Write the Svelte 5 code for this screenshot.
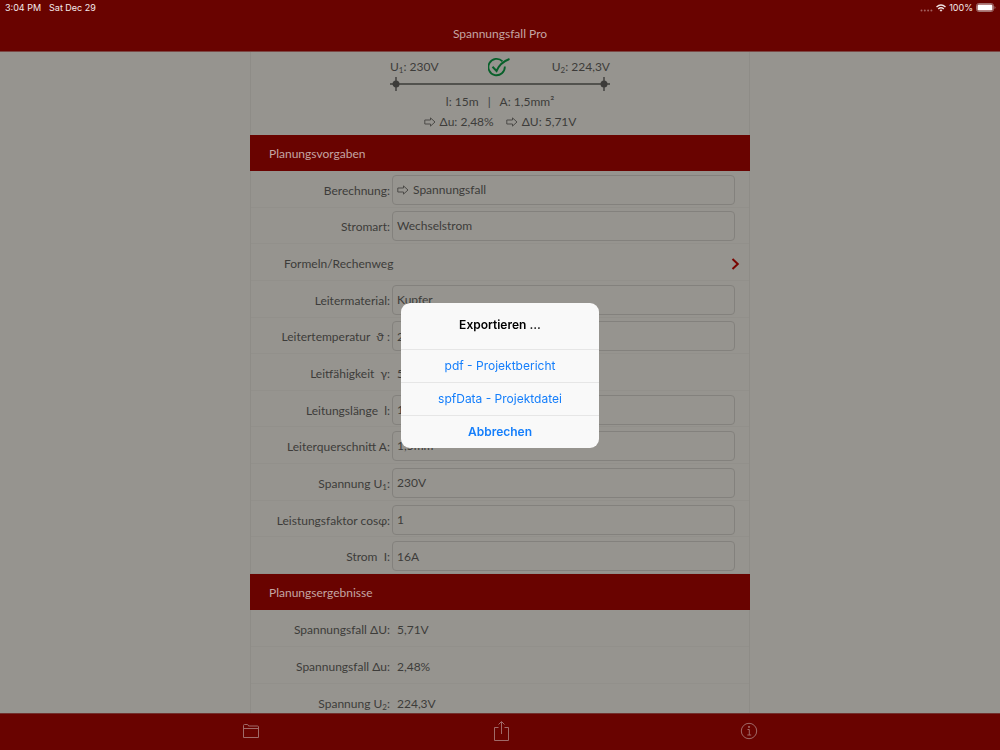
<script>
  const inputs = [
    { id: 'berechnung', label: 'Berechnung:', value: 'Spannungsfall', kind: 'select', arrow: true },
    { id: 'stromart', label: 'Stromart:', value: 'Wechselstrom', kind: 'select' },
    { id: 'formeln', label: 'Formeln/Rechenweg', kind: 'link' },
    { id: 'material', label: 'Leitermaterial:', value: 'Kupfer', kind: 'select' },
    { id: 'temperatur', label: 'Leitertemperatur \u00a0ϑ\u00a0:', value: '20°C', kind: 'input' },
    { id: 'leitfaehigkeit', label: 'Leitfähigkeit \u00a0γ:', value: '56', kind: 'text' },
    { id: 'laenge', label: 'Leitungslänge \u00a0l:', value: '15m', kind: 'input' },
    { id: 'querschnitt', label: 'Leiterquerschnitt A:', value: '1,5mm²', kind: 'select' },
    { id: 'spannung', label: 'Spannung U', sub: '1', value: '230V', kind: 'input' },
    { id: 'faktor', label: 'Leistungsfaktor cosφ:', value: '1', kind: 'input' },
    { id: 'strom', label: 'Strom \u00a0I:', value: '16A', kind: 'input' }
  ];
  const results = [
    { label: 'Spannungsfall ΔU:', value: '5,71V' },
    { label: 'Spannungsfall Δu:', value: '2,48%' },
    { label: 'Spannung U', sub: '2', value: '224,3V' }
  ];
  let open = $state(true);
  const close = () => (open = false);
</script>

{#snippet arrow()}
  <svg class="arrow" width="12" height="10" viewBox="0 0 12 10" fill="none" stroke="#4c4b48" aria-hidden="true">
    <path d="M.8 3H6.500V.9L11 5L6.500 9.100V7H.8Z" />
  </svg>
{/snippet}

<div class="app">
  <header>
    <div class="status">
      <span>3:04 PM</span>
      <span>Sat Dec 29</span>
      <span class="right">
        <svg width="13" height="8" viewBox="0 0 13 8" aria-hidden="true">
          <g fill="#a2605e"><circle cx="1.5" cy="6.5" r="1" /><circle cx="4.8" cy="6.5" r="1" /><circle cx="8.1" cy="6.5" r="1" /><circle cx="11.4" cy="6.5" r="1" /></g>
        </svg>
        <svg width="10" height="8" viewBox="0 0 10 8" fill="none" stroke="#f0e4e4" stroke-width="1.4" aria-hidden="true">
          <path d="M.5 3Q5-1 9.500 3M2.200 4.900Q5 2.400 7.800 4.900" />
          <path d="M3.500 6Q5 4.800 6.500 6L5 7.700Z" fill="#f0e4e4" stroke="none" />
        </svg>
        <span>100%</span>
        <svg width="20" height="9" viewBox="0 0 20 9" aria-hidden="true">
          <rect x=".5" y=".5" width="17" height="8" rx="2.300" fill="none" stroke="#a2706e" />
          <rect x="1.500" y="1.500" width="15" height="6" rx="1.300" fill="#fff" />
          <path d="M18.500 3v3q1-.5 1-1.500t-1-1.500" fill="#a2706e" />
        </svg>
      </span>
    </div>
    <h1>Spannungsfall Pro</h1>
  </header>

  <main>
    <div class="sheet">
      <section class="summary">
        <div class="ends">
          <span>U<sub>1</sub>: 230V</span>
          <svg width="24" height="20" viewBox="0 0 24 20" fill="none" stroke="#08602a" role="img" aria-label="In Ordnung">
            <path d="M14.500 4.300A8.200 8.200 0 1 0 16.800 9.500" stroke-width="1.800" />
            <path d="M4.500 9.800L8.500 14Q12 5.500 21.500 2" stroke-width="2" />
          </svg>
          <span>U<sub>2</sub>: 224,3V</span>
        </div>
        <svg class="line" width="220" height="14" viewBox="0 0 220 14" aria-hidden="true">
          <g stroke="#3d3c3a" stroke-width="1.400" fill="#3d3c3a">
            <path d="M0 7H220M6 0V14M214 0V14" />
            <circle cx="6" cy="7" r="2.800" /><circle cx="214" cy="7" r="2.800" />
          </g>
        </svg>
        <p>l: 15m &nbsp; | &nbsp; A: 1,5mm²</p>
        <p class="drop"><span>{@render arrow()}Δu: 2,48%</span><span>{@render arrow()}ΔU: 5,71V</span></p>
      </section>

      <h2>Planungsvorgaben</h2>
      <form class="rows inputs">
        {#each inputs as f}
          <div class="row">
            {#if f.kind === 'link'}
              <a href="#formeln" class="more">
                <span>{f.label}</span>
                <svg width="9" height="12" viewBox="0 0 9 12" fill="none" stroke="#7a0500" stroke-width="2" aria-hidden="true"><path d="M1.500 1L6.800 6L1.500 11" /></svg>
              </a>
            {:else}
              <label for={f.id}>{f.label}{#if f.sub}<sub>{f.sub}</sub>:{/if}</label>
              {#if f.kind === 'text'}
                <output id={f.id}>{f.value}</output>
              {:else}
                <div class="field">
                  {#if f.arrow}{@render arrow()}{/if}
                  {#if f.kind === 'select'}
                    <select id={f.id}><option>{f.value}</option></select>
                  {:else}
                    <input id={f.id} value={f.value} />
                  {/if}
                </div>
              {/if}
            {/if}
          </div>
        {/each}
      </form>

      <h2>Planungsergebnisse</h2>
      <div class="rows results">
        {#each results as r}
          <div class="row">
            <span class="name">{r.label}{#if r.sub}<sub>{r.sub}</sub>:{/if}</span>
            <output>{r.value}</output>
          </div>
        {/each}
      </div>
    </div>
  </main>

  <footer>
    <button aria-label="Projekte">
      <svg width="18" height="16" viewBox="0 0 18 16"><path d="M1.500 14.500V2.500Q1.500 1.500 2.500 1.500H5.500Q6.300 1.500 6.500 3H15.500Q16.500 3 16.500 4V14.500ZM1.500 5.500H16.500" /></svg>
    </button>
    <button aria-label="Exportieren" onclick={() => (open = true)}>
      <svg width="18" height="22" viewBox="0 0 18 22"><path d="M7.500 7.500H3.500V20.500H17.500V7.500H13.500M10.500 14V2M7.500 4.500L10.500 1.500L13.500 4.500" /></svg>
    </button>
    <button aria-label="Info">
      <svg width="18" height="18" viewBox="0 0 18 18"><circle cx="9" cy="9" r="7.700" /><path d="M7.500 7.500H9.300V13M7.300 13H11.200" /><circle cx="9" cy="4.900" r=".6" fill="#b08482" /></svg>
    </button>
  </footer>

  {#if open}
    <div class="overlay">
      <div class="alert" role="alertdialog" aria-labelledby="alert-title">
        <h3 id="alert-title">Exportieren ...</h3>
        <button onclick={close}>pdf - Projektbericht</button>
        <button onclick={close}>spfData - Projektdatei</button>
        <button class="cancel" onclick={close}>Abbrechen</button>
      </div>
    </div>
  {/if}
</div>

<style>
  :global(body) { margin: 0; background: #96948f; }
  .app {
    height: 100vh;
    display: flex;
    flex-direction: column;
    font: 12px/16px Lato, "DejaVu Sans", sans-serif;
    color: #3d3c3a;
    background: #96948f;
  }
  .app * { box-sizing: border-box; }
  h1, h2, h3, p { margin: 0; font-size: inherit; font-weight: 400; }
  button, input, select { font: inherit; color: inherit; border: 0; background: none; margin: 0; }
  sub { font-size: 8px; line-height: 0; vertical-align: -2px; }

  header { background: #690300; border-bottom: 1px solid #7c4744; color: #c4a5a3; flex: none; }
  .status {
    display: flex;
    gap: 8px;
    padding: 0 4px 0 5px;
    font: 9px/15px Inter, sans-serif;
    color: #f4eaea;
  }
  .right { margin-left: auto; display: flex; align-items: center; gap: 3px; }
  h1 { text-align: center; padding: 11px 0 9px; }

  main { flex: 1; min-height: 0; overflow: hidden; }
  .sheet { width: 50%; min-width: 400px; margin: 0 auto; border: solid #8e8c87; border-width: 0 1px; }
  .summary { display: flex; flex-direction: column; align-items: center; padding: 4px 0 3px; }
  .ends { width: 220px; display: grid; grid-template-columns: 1fr auto 1fr; align-items: center; height: 21px; }
  .ends span:last-child { text-align: right; }
  .line { margin-bottom: 1px; }
  .summary p { line-height: 20px; }
  .drop { display: flex; gap: 12px; }
  .drop span { display: flex; align-items: center; gap: 4px; }
  .arrow { flex: none; }
  h2 { margin: 0 -1px; padding: 11px 19px 9px; background: #690300; color: #c4a5a3; }
  .rows { display: grid; grid-auto-rows: 1fr; }
  .inputs { min-height: 403px; }
  .results .row { min-height: 37px; }
  .row { display: flex; align-items: center; gap: 2px; min-height: 36px; padding: 2px 14px 0 0; border-bottom: 1px solid #92908b; }
  label, .name, output, .more { padding-top: 2px; }
  label, .name { width: 139px; text-align: right; white-space: nowrap; flex: none; }
  .field { flex: 1; min-width: 0; height: 30px; display: flex; align-items: center; gap: 4px; padding: 0 4px; border: 1px solid #83817d; border-radius: 4px; }
  input, select { flex: 1; min-width: 0; height: 28px; padding: 0; appearance: none; }
  output { flex: 1; padding-left: 5px; }
  .more { flex: 1; display: flex; justify-content: space-between; align-items: center; padding-left: 33px; margin-right: -5px; color: inherit; text-decoration: none; }

  footer { flex: none; height: 37px; background: #690300; border-top: 1px solid #72302d; display: flex; align-items: center; justify-content: space-between; padding: 0 24% 2px; }
  footer button { display: flex; padding: 0; width: 22px; justify-content: center; }
  footer svg { fill: none; stroke: #a06a68; }

  .overlay { position: fixed; inset: 0; display: grid; place-items: center; }
  .alert {
    width: 198px;
    border-radius: 9px;
    overflow: hidden;
    background: #f9f9f9;
    display: flex;
    flex-direction: column;
    font: 12px/32px Inter, sans-serif;
  }
  .alert h3 { text-align: center; font-weight: 600; line-height: 44px; padding-bottom: 2px; color: #000; }
  .alert button { border-top: 1px solid #e6e6e6; color: #147efb; padding: 0; }
  .alert .cancel { font-weight: 600; }
</style>
